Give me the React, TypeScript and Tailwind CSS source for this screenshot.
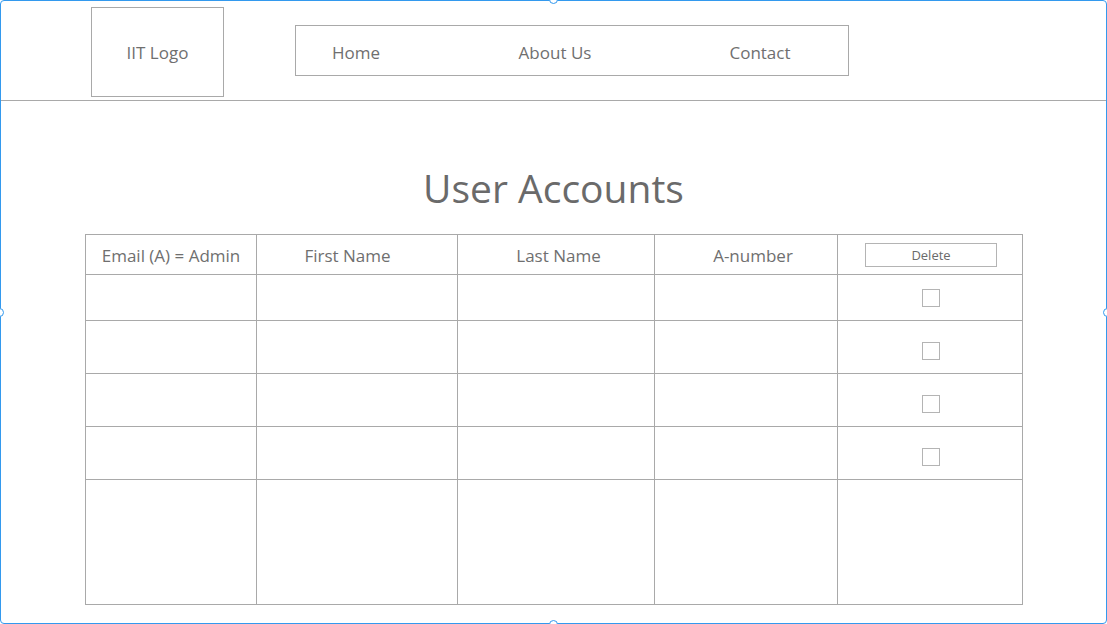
const line = "border-[#a9a9a9]"

function Handle({ className }: { className: string }) {
  return (
    <div
      className={`absolute w-[9px] h-[9px] rounded-full border border-[#3399ee] bg-white ${className}`}
    />
  )
}

function Cell({ children, className = "" }: { children?: React.ReactNode; className?: string }) {
  return <div className={`border-r border-b ${line} ${className}`}>{children}</div>
}

function Checkbox() {
  return <div className="w-[18px] h-[18px] border border-[#b4b4b4] bg-white" />
}

export default function App() {
  const rows = [
    { h: "h-[46px]", pt: "pt-[14px]" },
    { h: "h-[53px]", pt: "pt-[21px]" },
    { h: "h-[53px]", pt: "pt-[21px]" },
    { h: "h-[53px]", pt: "pt-[21px]" },
  ]

  return (
    <div className="relative w-[1107px] h-[624px] overflow-hidden bg-white font-['Open_Sans',sans-serif] text-[#6f6f6f]">
      <div className="w-full h-full border border-[#3399ee] rounded-[4px]">
        {/* top bar */}
        <header className={`h-[100px] border-b ${line} flex items-start`}>
          <div className="ml-[90px] mt-[6px] w-[133px] h-[90px] pt-[2px] border border-[#a9a9a9] flex items-center justify-center text-[17px]">
            IIT Logo
          </div>
          <nav className="ml-[71px] mt-[24px] w-[554px] h-[51px] pt-[5px] border border-[#a9a9a9] flex items-center text-[17px]">
            <span className="w-[120px] text-center">Home</span>
            <span className="w-[278px] text-center">About Us</span>
            <span className="w-[132px] text-center">Contact</span>
          </nav>
        </header>

        <h1 className="mt-[63px] text-center text-[39px] leading-[48px] text-[#6a6a6a]">User Accounts</h1>

        <div className={`ml-[84px] mt-[22px] w-[938px] border-l border-t ${line} grid grid-cols-[171px_201px_197px_183px_185px] text-[17px]`}>
          <Cell className="h-[40px] pt-[3px] flex items-center justify-center">Email (A) = Admin</Cell>
          <Cell className="h-[40px] pt-[3px] flex items-center justify-center pr-[19px]">First Name</Cell>
          <Cell className="h-[40px] pt-[3px] flex items-center justify-center pl-[5px]">Last Name</Cell>
          <Cell className="h-[40px] pt-[3px] flex items-center justify-center pl-[14px]">A-number</Cell>
          <Cell className="h-[40px] pl-[2px] flex items-center justify-center">
            <button className="w-[132px] h-[24px] pt-[2px] border border-[#b4b4b4] bg-white text-[13px] text-[#6a6a6a] flex items-center justify-center">
              Delete
            </button>
          </Cell>

          {rows.map((r, i) => (
            <div key={i} className="contents">
              <Cell className={r.h} />
              <Cell className={r.h} />
              <Cell className={r.h} />
              <Cell className={r.h} />
              <Cell className={`${r.h} ${r.pt} pl-[2px] flex justify-center items-start`}>
                <Checkbox />
              </Cell>
            </div>
          ))}

          <Cell className="h-[125px]" />
          <Cell className="h-[125px]" />
          <Cell className="h-[125px]" />
          <Cell className="h-[125px]" />
          <Cell className="h-[125px]" />
        </div>
      </div>

      {/* selection handles */}
      <Handle className="left-[549px] top-[-5px]" />
      <Handle className="left-[549px] bottom-[-5px]" />
      <Handle className="left-[-5px] top-[308px]" />
      <Handle className="right-[-5px] top-[308px]" />
    </div>
  )
}
